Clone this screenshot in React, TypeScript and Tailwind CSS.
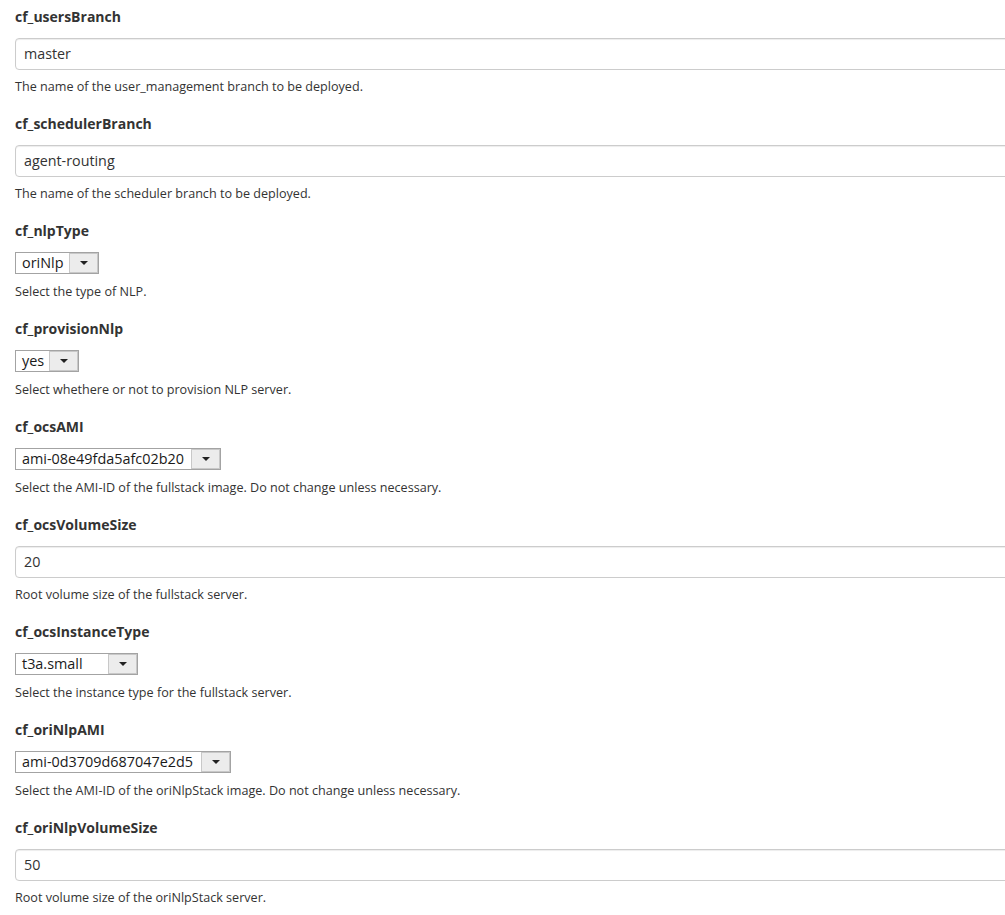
import React from "react";

type Field =
  | { name: string; kind: "text"; value: string; help: string }
  | { name: string; kind: "select"; value: string; width: number; help: string };

const fields: Field[] = [
  { name: "cf_usersBranch", kind: "text", value: "master", help: "The name of the user_management branch to be deployed." },
  { name: "cf_schedulerBranch", kind: "text", value: "agent-routing", help: "The name of the scheduler branch to be deployed." },
  { name: "cf_nlpType", kind: "select", value: "oriNlp", width: 84, help: "Select the type of NLP." },
  { name: "cf_provisionNlp", kind: "select", value: "yes", width: 64, help: "Select whethere or not to provision NLP server." },
  { name: "cf_ocsAMI", kind: "select", value: "ami-08e49fda5afc02b20", width: 206, help: "Select the AMI-ID of the fullstack image. Do not change unless necessary." },
  { name: "cf_ocsVolumeSize", kind: "text", value: "20", help: "Root volume size of the fullstack server." },
  { name: "cf_ocsInstanceType", kind: "select", value: "t3a.small", width: 123, help: "Select the instance type for the fullstack server." },
  { name: "cf_oriNlpAMI", kind: "select", value: "ami-0d3709d687047e2d5", width: 216, help: "Select the AMI-ID of the oriNlpStack image. Do not change unless necessary." },
  { name: "cf_oriNlpVolumeSize", kind: "text", value: "50", help: "Root volume size of the oriNlpStack server." },
];

function FakeSelect({ value, width }: { value: string; width: number }) {
  return (
    <div
      className="flex h-[22px] border border-[#a3a3a3] bg-white text-[14.4px] text-[#1a1a1a]"
      style={{ width }}
    >
      <div className="flex-1 pl-[6px] leading-[20px] whitespace-nowrap overflow-hidden">{value}</div>
      <div className="flex w-[29px] items-center justify-center border border-[#c8c8c8] bg-[#ececec]">
        <svg width="8" height="4" viewBox="0 0 8 4">
          <path d="M0 0h8L4 4z" fill="#222" />
        </svg>
      </div>
    </div>
  );
}

export default function App() {
  return (
    <div className="h-[915px] w-full overflow-hidden bg-white text-[#333] font-['Open_Sans',sans-serif]">
      <div className="pl-[15px] pt-[7px]">
        {fields.map((f) => (
          <div key={f.name} className="mb-[19px]">
            <div className="text-[14px] font-bold leading-[20px] text-[#333]">{f.name}</div>
            <div className={f.kind === "text" ? "mt-[11px] mb-[9px]" : "mt-[11px] mb-[10px]"}>
              {f.kind === "text" ? (
                <div className="h-[32px] w-[1100px] rounded-[4px] border border-[#ccc] bg-white pl-[8px] text-[14.3px] leading-[30px] text-[#333] shadow-[inset_0_1px_1px_rgba(0,0,0,0.075)]">
                  {f.value}
                </div>
              ) : (
                <FakeSelect value={f.value} width={f.width} />
              )}
            </div>
            <div className="text-[12.6px] leading-[16px] text-[#333]">{f.help}</div>
          </div>
        ))}
      </div>
    </div>
  );
}
